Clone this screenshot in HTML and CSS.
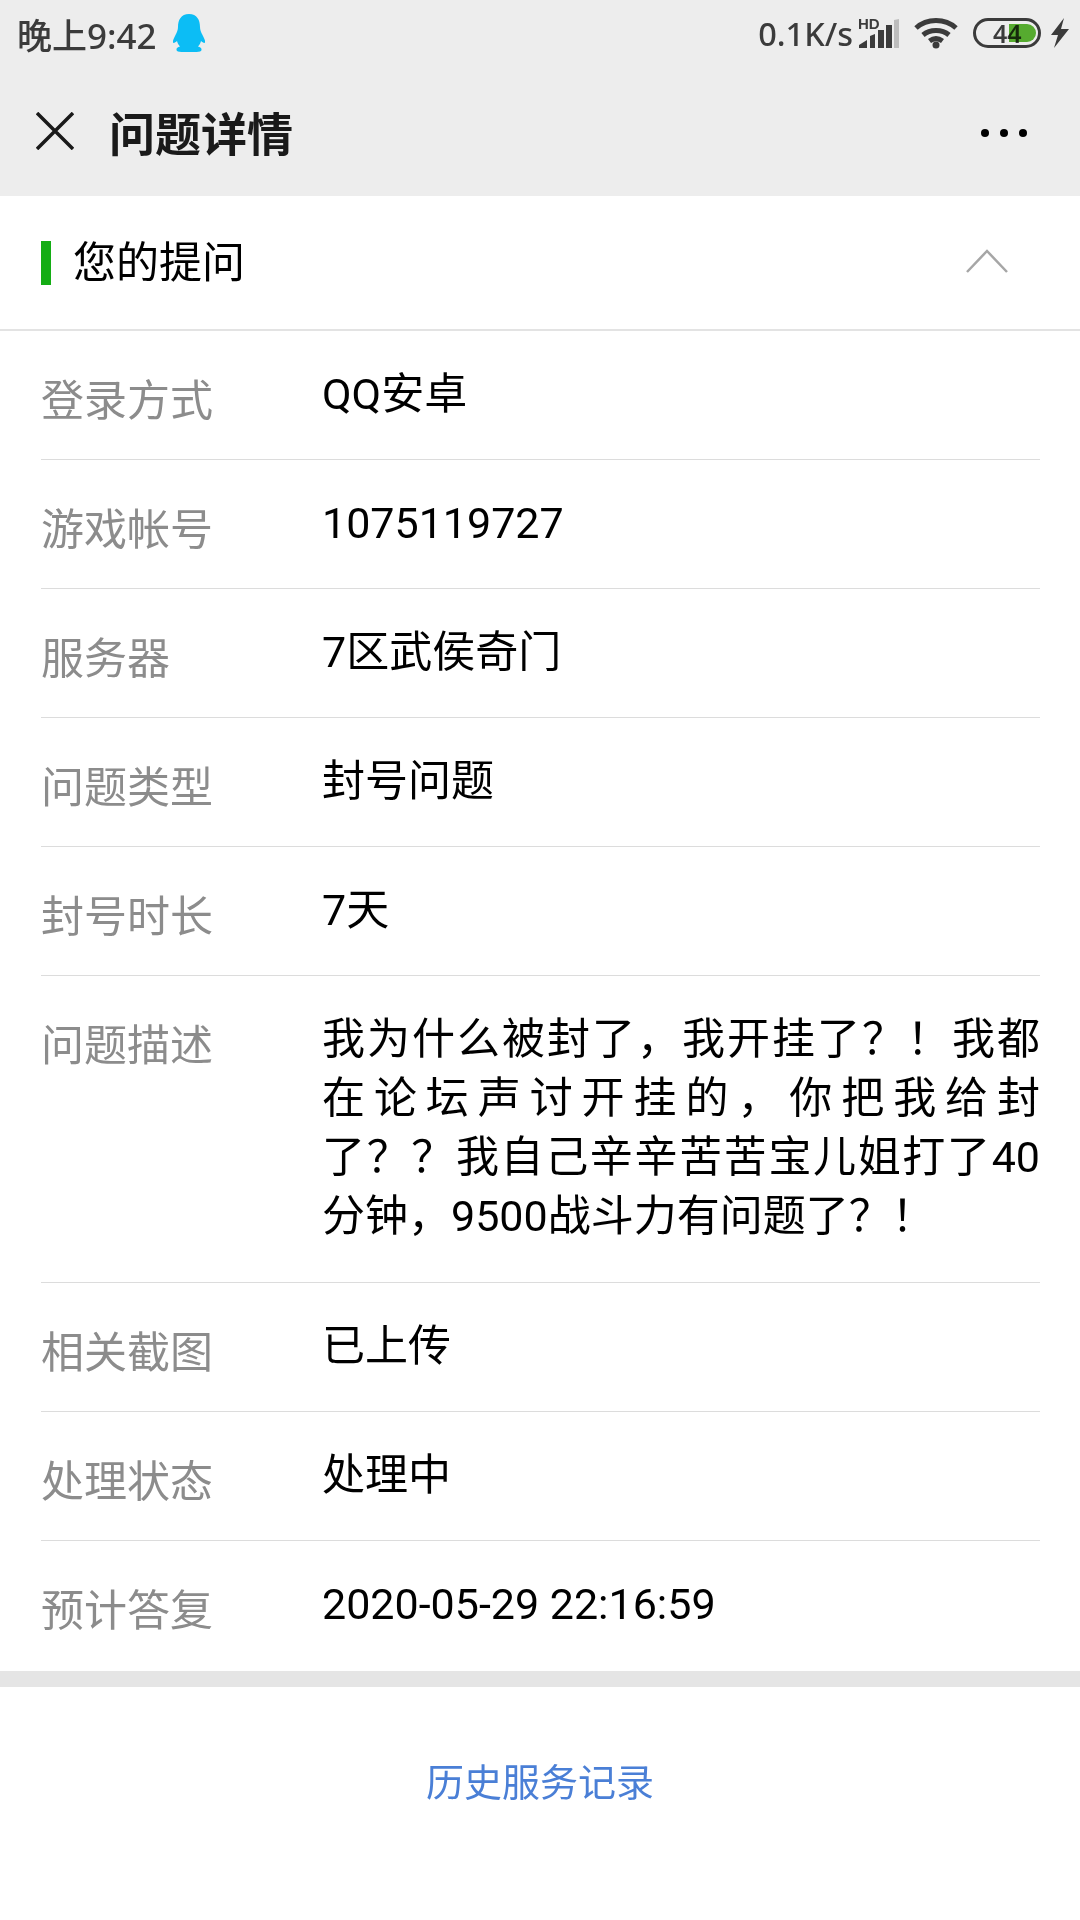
FILE: index.html
```html
<!DOCTYPE html>
<html lang="zh-CN">
<head>
    <meta charset="UTF-8">
    <meta name="viewport" content="width=device-width, initial-scale=1.0">
    <title>问题详情</title>
    <link rel="stylesheet" href="styles.css">
</head>
<body>
    <div class="top">
        <!-- Status bar -->
        <div class="status-bar">
            <div class="status-left">
                <span class="clock">晚上9:42</span>
                <svg class="qq" width="34" height="38" viewBox="0 0 34 38">
                    <path fill="#0cbdf5" d="M17 0C9 0 6 6 6 13c0 3-1 5-2.500 8C2 24 .5 27 1 28.500c.5 1 2.500 0 4-1.500 .5 2 1.500 4 3 5.500-2 .5-4 1.500-3.500 3.500 0 1 2 2 5 2h15c3 0 5-1 5-2 .5-2-1.500-3-3.500-3.500 1.500-1.500 2.500-3.500 3-5.500 1.500 1.500 3.500 2.500 4 1.500 .5-1.500-1-4.500-2.500-7.500C29 18 28 16 28 13 28 6 25 0 17 0z"/>
                </svg>
            </div>
            <div class="status-right">
                <span class="speed">0.1K/s</span>
                <svg class="signal" width="42" height="34" viewBox="0 -3 42 34">
                    <text x="0" y="11" class="hd">HD</text>
                    <path fill="#3b3b3b" d="M1 30v-3l8-5v8zM12 30V18l5-2v14zM20 30V12h6v18zM28 30V7h6v23z"/>
                    <path fill="#bdbdbd" d="M36 30V2l5-1v29z"/>
                </svg>
                <svg class="wifi" width="44" height="32" viewBox="0 0 44 32">
                    <g fill="none" stroke="#3b3b3b" stroke-width="5">
                        <path d="M2 11c11-10 29-10 40 0"/>
                        <path d="M9 18c7-6 19-6 26 0"/>
                        <path d="M15.500 24c4-3 9-3 13 0"/>
                    </g>
                    <circle cx="22" cy="28" r="3.500" fill="#3b3b3b"/>
                </svg>
                <div class="battery">
                    <span class="battery-num">44</span>
                    <div class="battery-fill"></div>
                </div>
                <svg class="bolt" width="20" height="30" viewBox="0 0 20 30">
                    <path fill="#3b3b3b" d="M14 0L1 17h7L4 30l15-19h-8z"/>
                </svg>
            </div>
        </div>
        <!-- Title bar -->
        <div class="nav">
            <svg class="close" width="38" height="38" viewBox="0 0 38 38">
                <path stroke="#1a1a1a" stroke-width="3.500" d="M1 1l36 36M37 1L1 37"/>
            </svg>
            <h1>问题详情</h1>
            <div class="dots"><i></i><i></i><i></i></div>
        </div>
    </div>

    <div class="section-head">
        <span class="green-mark"></span>
        <span class="section-title">您的提问</span>
        <svg class="chevron" width="42" height="24" viewBox="0 0 42 24">
            <path fill="none" stroke="#a6a6a6" stroke-width="2.500" d="M1 23L21 2l20 21"/>
        </svg>
    </div>

    <div class="list">
        <div class="row"><div class="label">登录方式</div><div class="value">QQ安卓</div></div>
        <div class="row"><div class="label">游戏帐号</div><div class="value">1075119727</div></div>
        <div class="row"><div class="label">服务器</div><div class="value">7区武侯奇门</div></div>
        <div class="row"><div class="label">问题类型</div><div class="value">封号问题</div></div>
        <div class="row"><div class="label">封号时长</div><div class="value">7天</div></div>
        <div class="row row-desc"><div class="label">问题描述</div><div class="value desc">我为什么被封了，我开挂了？！我都在论坛声讨开挂的，你把我给封了？？我自己辛辛苦苦宝儿姐打了40分钟，9500战斗力有问题了？！</div></div>
        <div class="row"><div class="label">相关截图</div><div class="value">已上传</div></div>
        <div class="row"><div class="label">处理状态</div><div class="value">处理中</div></div>
        <div class="row"><div class="label">预计答复</div><div class="value">2020-05-29 22:16:59</div></div>
    </div>

    <div class="history"><a href="#">历史服务记录</a></div>
</body>
</html>
```

FILE: styles.css
```css
body {
    margin: 0;
    width: 1080px;
    height: 1920px;
    overflow: hidden;
    background-color: #fff;
    font-family: Roboto, "Noto Sans CJK SC", sans-serif;
    color: #000;
}

.top {
    height: 196px;
    background-color: #ededed;
}

/* Status bar */
.status-bar {
    height: 66px;
    display: flex;
    justify-content: space-between;
    align-items: center;
    padding: 0 10px 0 17px;
    color: #3b3b3b;
}

.status-left,
.status-right {
    display: flex;
    align-items: center;
}

.clock {
    font-family: "Noto Sans", "Noto Sans CJK SC", sans-serif;
    font-size: 35px;
    font-weight: 500;
}

.qq {
    margin-left: 15px;
}

.speed {
    font-family: "Noto Sans", sans-serif;
    font-size: 32.500px;
    font-weight: 500;
}

.signal {
    margin-left: 5px;
    margin-top: -3px;
}

.hd {
    font-family: "Liberation Sans", sans-serif;
    font-size: 15px;
    font-weight: 700;
    fill: #3b3b3b;
}

.wifi {
    margin-left: 14px;
}

.battery {
    position: relative;
    box-sizing: border-box;
    width: 68px;
    height: 30px;
    margin-left: 15px;
    border: 3px solid #3b3b3b;
    border-radius: 15px;
}

.battery-fill {
    position: absolute;
    left: 33px;
    top: 3px;
    width: 27px;
    height: 18px;
    background-color: #5cb832;
    border-radius: 0 9px 9px 0;
    mix-blend-mode: multiply;
}

.battery-num {
    display: block;
    padding-left: 17px;
    font-family: "Noto Sans", sans-serif;
    font-size: 25px;
    line-height: 24px;
    font-weight: 600;
    color: #3b3b3b;
}

.bolt {
    margin-left: 9px;
}

/* Title bar */
.nav {
    height: 130px;
    display: flex;
    align-items: center;
    padding: 0 53px 0 36px;
}

.close {
    flex: none;
}

.nav h1 {
    flex: 1;
    margin: 0 0 0 35px;
    font-size: 46px;
    font-weight: 700;
    color: #1a1a1a;
}

.dots {
    display: flex;
    gap: 11px;
    margin-top: 3px;
}

.dots i {
    width: 8px;
    height: 8px;
    background-color: #000;
    border-radius: 50%;
}

/* Section header */
.section-head {
    height: 135px;
    box-sizing: border-box;
    display: flex;
    align-items: center;
    padding: 0 72px 0 41px;
    border-bottom: 2px solid #e3e3e3;
}

.green-mark {
    width: 10px;
    height: 44px;
    background-color: #14ad14;
}

.section-title {
    flex: 1;
    margin-left: 22px;
    padding-bottom: 8px;
    font-size: 43px;
}

.chevron {
    margin-bottom: 4px;
}

/* Rows */
.list {
    padding: 0 40px 0 41px;
}

.row {
    display: flex;
    padding: 34px 0 35px;
    border-bottom: 1px solid #dcdcdc;
    font-size: 43px;
    line-height: 59px;
}

.row-desc {
    padding-bottom: 36px;
}

.row:last-child {
    padding-bottom: 37px;
    border-bottom: none;
}

.label {
    flex: none;
    width: 281px;
    padding-top: 14px;
    line-height: 45px;
    color: #8c8c8c;
}

.value {
    flex: 1;
}

.desc {
    text-align: justify;
}

/* Bottom link */
.history {
    height: 233px;
    border-top: 16px solid #e5e5e5;
    text-align: center;
    padding-top: 65px;
    box-sizing: border-box;
    font-size: 38px;
}

.history a {
    color: #4a7fd6;
    text-decoration: none;
}
```
